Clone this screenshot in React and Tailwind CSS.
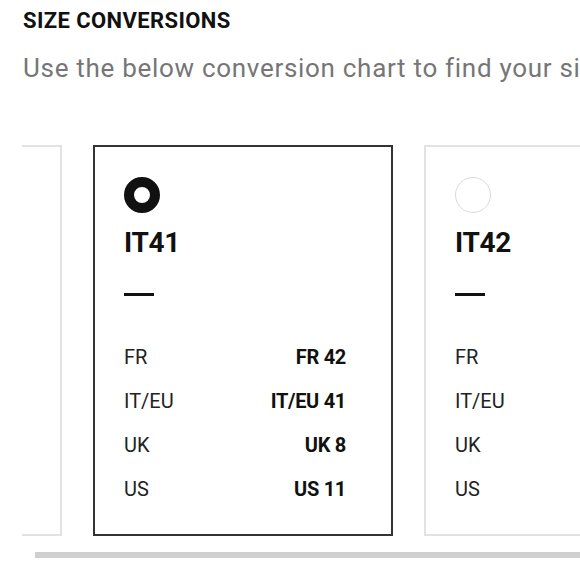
const sizes = [
  { it: 'IT40', fr: 'FR 41', eu: 'IT/EU 40', uk: 'UK 7', us: 'US 10', hidden: true },
  { it: 'IT41', fr: 'FR 42', eu: 'IT/EU 41', uk: 'UK 8', us: 'US 11' },
  { it: 'IT42', fr: 'FR 43', eu: 'IT/EU 42', uk: 'UK 9', us: 'US 12' },
];

function SizeCard({ size, selected }) {
  const rows = [
    ['FR', size.fr],
    ['IT/EU', size.eu],
    ['UK', size.uk],
    ['US', size.us],
  ];
  const border = selected ? 'border-[#333]' : 'border-[#e2e2e2]';

  // the card scrolled out to the left only shows its edge
  if (size.hidden) {
    return <div className={`shrink-0 w-[300px] h-[391px] border-2 ${border}`} />;
  }

  return (
    <div className={`shrink-0 w-[300px] h-[391px] border-2 pl-[29px] pr-[45px] pt-[30px] ${border}`}>
      {/* radio */}
      <div
        className={`w-[36px] h-[36px] rounded-full ${
          selected ? 'border-[10px] border-[#111]' : 'border-[1.5px] border-[#d9d9d9]'
        }`}
      />
      <div className="mt-[14px] text-[28px] leading-[32px] font-bold text-[#111] tracking-[-0.3px]">{size.it}</div>
      <div className="mt-[34px] w-[30px] h-[3px] bg-[#111]" />
      <div className="mt-[39px]">
        {rows.map(([label, value]) => (
          <div key={label} className="h-[44px] flex items-center justify-between text-[20px] leading-[44px]">
            <span className="text-[#222]">{label}</span>
            {selected && <span className="font-bold text-[#111] tracking-[-0.3px]">{value}</span>}
          </div>
        ))}
      </div>
    </div>
  );
}

export default function App() {
  return (
    <div className="w-[580px] h-[580px] overflow-hidden bg-white" style={{ fontFamily: 'Roboto, "Liberation Sans", sans-serif' }}>
      <div className="pl-[23px] pt-[8px]">
        <h1 className="text-[22px] leading-[26px] font-bold text-[#111] tracking-[0.4px]">SIZE CONVERSIONS</h1>
        <p className="mt-[18px] text-[26px] leading-[32px] text-[#767676] tracking-[0.7px] whitespace-nowrap">
          Use the below conversion chart to find your size.
        </p>
      </div>

      <div className="ml-[22px] mt-[61px] overflow-hidden">
        <div className="flex gap-[31px] ml-[-260px]">
          {sizes.map((s, i) => (
            <SizeCard key={s.it} size={s} selected={i === 1} />
          ))}
        </div>
      </div>

      {/* scroll indicator */}
      <div className="ml-[35px] mt-[16px] h-[6px] bg-[#cfcfcf]" />
    </div>
  );
}
